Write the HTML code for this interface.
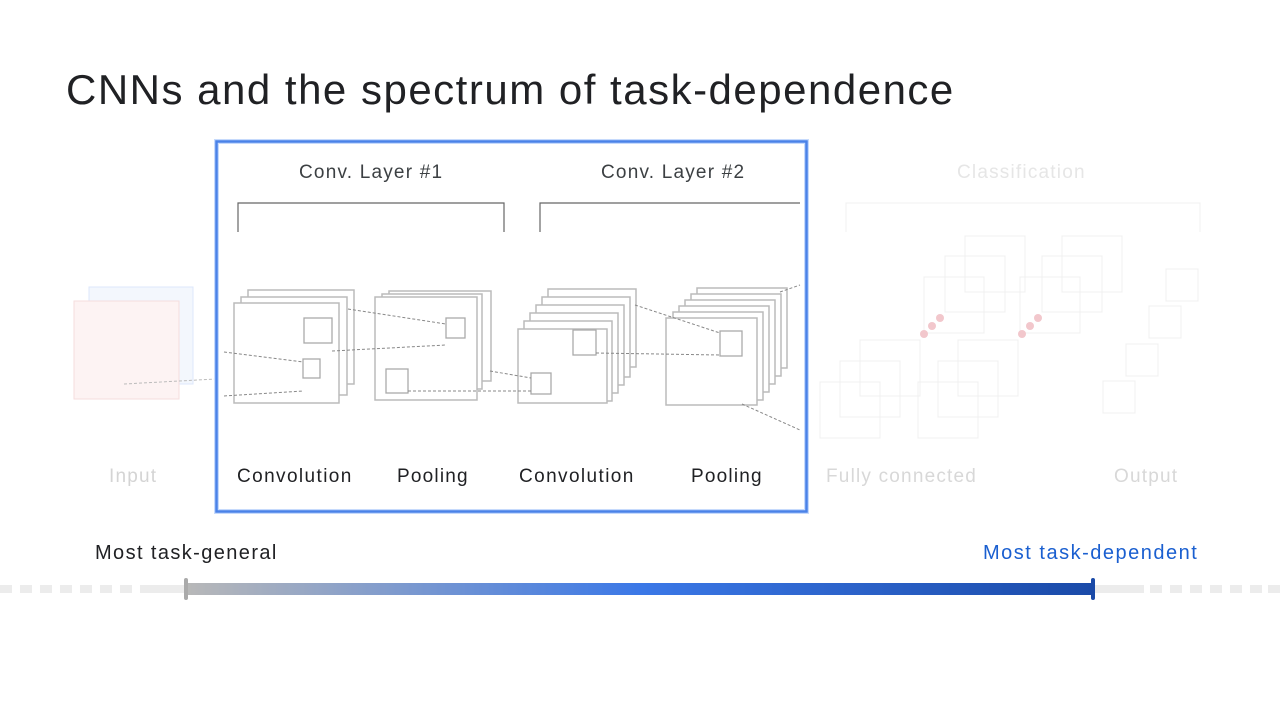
<!DOCTYPE html>
<html><head><meta charset="utf-8"><style>
html,body{margin:0;padding:0;background:#fff;width:1280px;height:720px;overflow:hidden;font-family:"Liberation Sans",sans-serif;}
.t{position:absolute;white-space:nowrap;font-size:19px;letter-spacing:1.2px;}
</style></head><body>
<div class="t" style="left:66px;top:66px;font-size:42px;letter-spacing:1.5px;color:#202124;">CNNs and the spectrum of task-dependence</div>
<svg width="1280" height="720" style="position:absolute;left:0;top:0" xmlns="http://www.w3.org/2000/svg">
<rect x="89" y="287" width="104" height="97" fill="#f3f7fd" stroke="#dce7fb"/>
<rect x="74" y="301" width="105" height="98" fill="#fdf3f3" stroke="#f5dede"/>
<line x1="124" y1="384" x2="216" y2="379" stroke="#bbb" stroke-dasharray="3,2"/>
<g stroke="#f0f0f0" fill="none">
<path d="M846 232V203H1200V232"/>
<rect x="965" y="236" width="60" height="56"/><rect x="1062" y="236" width="60" height="56"/>
<rect x="945" y="256" width="60" height="56"/><rect x="1042" y="256" width="60" height="56"/>
<rect x="924" y="277" width="60" height="56"/><rect x="1020" y="277" width="60" height="56"/>
<rect x="860" y="340" width="60" height="56"/><rect x="958" y="340" width="60" height="56"/>
<rect x="840" y="361" width="60" height="56"/><rect x="938" y="361" width="60" height="56"/>
<rect x="820" y="382" width="60" height="56"/><rect x="918" y="382" width="60" height="56"/>
<rect x="1166" y="269" width="32" height="32"/><rect x="1149" y="306" width="32" height="32"/>
<rect x="1126" y="344" width="32" height="32"/><rect x="1103" y="381" width="32" height="32"/>
</g>
<g fill="#f2c7cc"><circle cx="924" cy="334" r="4"/><circle cx="932" cy="326" r="4"/><circle cx="940" cy="318" r="4"/>
<circle cx="1022" cy="334" r="4"/><circle cx="1030" cy="326" r="4"/><circle cx="1038" cy="318" r="4"/></g>
<rect x="216.5" y="141.5" width="590" height="370" fill="none" stroke="#c6dafc" stroke-width="5"/>
<rect x="216.5" y="141.5" width="590" height="370" fill="none" stroke="#4a82e8" stroke-width="2.5"/>
<g stroke="#666" fill="none" stroke-width="1.2">
<path d="M238 232V203H504V232"/><path d="M540 232V203H800"/>
</g>
<g fill="#fff" stroke="#bbb" stroke-width="1.5">
<rect x="248" y="290" width="106" height="94"/><rect x="241" y="297" width="106" height="98"/><rect x="234" y="303" width="105" height="100"/>
<rect x="389" y="291" width="102" height="90"/><rect x="382" y="294" width="100" height="95"/><rect x="375" y="297" width="102" height="103"/>
<rect x="548" y="289" width="88" height="78"/><rect x="542" y="297" width="88" height="80"/><rect x="536" y="305" width="88" height="80"/><rect x="530" y="313" width="88" height="80"/><rect x="524" y="321" width="88" height="80"/><rect x="518" y="329" width="89" height="74"/>
<rect x="697" y="288" width="90" height="80"/><rect x="691" y="294" width="90" height="82"/><rect x="685" y="300" width="90" height="84"/><rect x="679" y="306" width="90" height="86"/><rect x="673" y="312" width="90" height="88"/><rect x="666" y="318" width="91" height="87"/>
</g>
<g fill="none" stroke="#aaa" stroke-width="1.3">
<rect x="304" y="318" width="28" height="25"/><rect x="303" y="359" width="17" height="19"/>
<rect x="446" y="318" width="19" height="20"/><rect x="386" y="369" width="22" height="24"/>
<rect x="573" y="330" width="23" height="25"/><rect x="531" y="373" width="20" height="21"/>
<rect x="720" y="331" width="22" height="25"/>
</g>
<g stroke="#888" stroke-dasharray="3,2" fill="none">
<line x1="224" y1="352" x2="303" y2="362"/><line x1="224" y1="396" x2="303" y2="391"/>
<line x1="348" y1="309" x2="446" y2="324"/><line x1="332" y1="351" x2="446" y2="345"/>
<line x1="408" y1="391" x2="531" y2="391"/><line x1="490" y1="371" x2="531" y2="378"/>
<line x1="596" y1="353" x2="720" y2="355"/><line x1="635" y1="305" x2="720" y2="333"/>
<line x1="742" y1="404" x2="800" y2="430"/><line x1="780" y1="292" x2="800" y2="285"/>
</g>
<g fill="#ececec">
<rect x="0" y="585" width="12" height="8"/><rect x="20" y="585" width="12" height="8"/><rect x="40" y="585" width="12" height="8"/><rect x="60" y="585" width="12" height="8"/><rect x="80" y="585" width="12" height="8"/><rect x="100" y="585" width="12" height="8"/><rect x="120" y="585" width="12" height="8"/>
<rect x="140" y="585" width="46" height="8"/><rect x="1094" y="585" width="50" height="8"/>
<rect x="1150" y="585" width="12" height="8"/><rect x="1170" y="585" width="12" height="8"/><rect x="1190" y="585" width="12" height="8"/><rect x="1210" y="585" width="12" height="8"/><rect x="1230" y="585" width="12" height="8"/><rect x="1250" y="585" width="12" height="8"/><rect x="1268" y="585" width="12" height="8"/>
</g>
<defs><linearGradient id="g" x1="0" x2="1"><stop offset="0" stop-color="#b8b8b8"/><stop offset="0.5" stop-color="#3b78e7"/><stop offset="1" stop-color="#1a4aa8"/></linearGradient></defs>
<rect x="186" y="583" width="908" height="12" fill="url(#g)"/>
<rect x="184" y="578" width="4" height="22" rx="2" fill="#aaa"/>
<rect x="1091" y="578" width="4" height="22" rx="2" fill="#1a4aa8"/>
</svg>
<div class="t" style="left:299px;top:162px;color:#3c4043;">Conv. Layer #1</div>
<div class="t" style="left:601px;top:162px;color:#3c4043;">Conv. Layer #2</div>
<div class="t" style="left:957px;top:162px;color:#e6e6e6;">Classification</div>
<div class="t" style="left:109px;top:466px;color:#d4d4d4;">Input</div>
<div class="t" style="left:237px;top:466px;color:#202124;letter-spacing:1.4px;">Convolution</div>
<div class="t" style="left:397px;top:466px;color:#202124;">Pooling</div>
<div class="t" style="left:519px;top:466px;color:#202124;letter-spacing:1.4px;">Convolution</div>
<div class="t" style="left:691px;top:466px;color:#202124;">Pooling</div>
<div class="t" style="left:826px;top:466px;color:#d8d8d8;">Fully connected</div>
<div class="t" style="left:1114px;top:466px;color:#d8d8d8;">Output</div>
<div class="t" style="left:95px;top:542px;font-size:20px;letter-spacing:1.4px;color:#202124;">Most task-general</div>
<div class="t" style="left:983px;top:542px;font-size:20px;letter-spacing:1.5px;color:#1a5fd0;">Most task-dependent</div>
</body></html>
